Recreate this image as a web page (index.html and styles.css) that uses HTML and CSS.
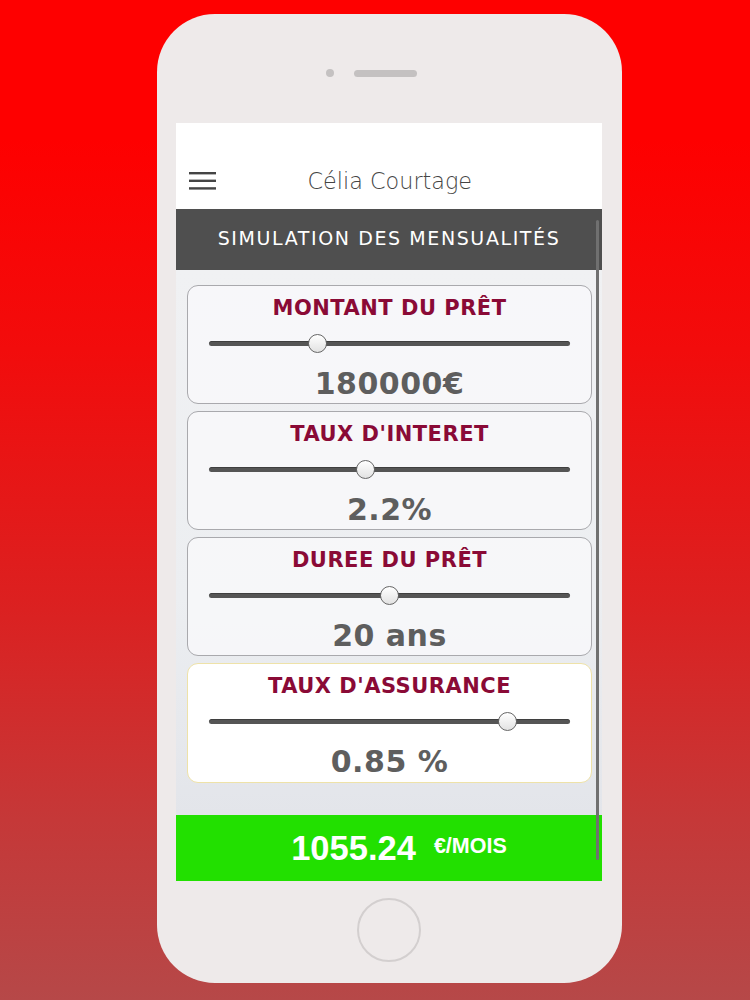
FILE: index.html
```html
<!DOCTYPE html>
<html lang="fr">
<head>
<meta charset="utf-8">
<title>Célia Courtage</title>
<link rel="stylesheet" href="styles.css">
</head>
<body>
<div class="phone">
  <div class="phone-top">
    <span class="camera"></span>
    <span class="speaker"></span>
  </div>
  <div class="screen">
    <header class="appbar">
      <svg class="burger" width="27" height="18" viewBox="0 0 27 18">
        <rect x="0" y="0" width="27" height="2.4" fill="#444"/>
        <rect x="0" y="7.6" width="27" height="2.4" fill="#444"/>
        <rect x="0" y="15.2" width="27" height="2.4" fill="#444"/>
      </svg>
      <div class="brand">Célia Courtage</div>
    </header>
    <div class="titlebar">SIMULATION DES MENSUALITÉS</div>
    <main class="content">
      <div class="scrollbar"></div>
      <section class="card">
        <h2 class="card-title">MONTANT DU PRÊT</h2>
        <div class="slider"><span class="thumb" style="left:30.1%"></span></div>
        <div class="value">180000€</div>
      </section>
      <section class="card">
        <h2 class="card-title">TAUX D'INTERET</h2>
        <div class="slider"><span class="thumb" style="left:43.4%"></span></div>
        <div class="value">2.2%</div>
      </section>
      <section class="card">
        <h2 class="card-title">DUREE DU PRÊT</h2>
        <div class="slider"><span class="thumb" style="left:50%"></span></div>
        <div class="value">20 ans</div>
      </section>
      <section class="card card-active">
        <h2 class="card-title">TAUX D'ASSURANCE</h2>
        <div class="slider"><span class="thumb" style="left:82.9%"></span></div>
        <div class="value">0.85 %</div>
      </section>
    </main>
    <footer class="result">
      <span class="amount">1055.24</span>
      <span class="unit">€/MOIS</span>
    </footer>
  </div>
  <div class="phone-bottom">
    <span class="home"></span>
  </div>
</div>
</body>
</html>
```
FILE: styles.css
```css
html, body {
  margin: 0;
  padding: 0;
}
body {
  width: 750px;
  height: 1000px;
  box-sizing: border-box;
  padding: 14px 0 0 157px;
  background: linear-gradient(to bottom, #fe0000 0%, #fe0000 14%, #f20c0c 35%, #dc2020 60%, #c53838 82%, #b64848 100%);
  font-family: "Liberation Sans", Arial, sans-serif;
  overflow: hidden;
}
.phone {
  width: 465px;
  height: 969px;
  background: #eeeaea;
  border-radius: 58px;
  box-sizing: border-box;
  padding: 0 20px 0 19px;
  display: flex;
  flex-direction: column;
}
.phone-top {
  height: 109px;
  display: flex;
  align-items: flex-start;
  justify-content: center;
  padding-top: 56px;
  box-sizing: border-box;
  gap: 20px;
  padding-right: 35px;
}
.camera {
  width: 8px;
  height: 8px;
  border-radius: 50%;
  background: #c4c1c1;
  margin-top: -1px;
}
.speaker {
  width: 63px;
  height: 7px;
  border-radius: 4px;
  background: #c4c1c1;
}
.screen {
  height: 758px;
  display: flex;
  flex-direction: column;
  background: #eef0f2;
}
.appbar {
  height: 86px;
  background: #ffffff;
  position: relative;
  display: flex;
  align-items: center;
  justify-content: center;
  padding-top: 29px;
  box-sizing: border-box;
}
.burger {
  position: absolute;
  left: 13px;
  top: 49px;
}
.brand {
  font-family: "DejaVu Sans", sans-serif;
  font-weight: 300;
  font-size: 23px;
  color: #444444;
  letter-spacing: 0;
  margin-left: 1px;
  transform: scaleX(0.97);
}
.titlebar {
  height: 61px;
  background: #4f4f4f;
  color: #ffffff;
  display: flex;
  align-items: center;
  justify-content: center;
  padding-bottom: 4px;
  box-sizing: border-box;
  font-family: "DejaVu Sans", sans-serif;
  font-size: 19px;
  letter-spacing: 1.6px;
}
.content {
  flex: 1;
  position: relative;
  padding: 15px 10px 0 11px;
  display: flex;
  flex-direction: column;
  gap: 7px;
  background: linear-gradient(180deg, #f0f1f3 0%, #eceef1 60%, #e3e5ea 100%);
}
.scrollbar {
  position: absolute;
  right: 3px;
  top: -50px;
  width: 3px;
  height: 640px;
  background: #707070;
  border-radius: 2px;
}
.card {
  height: 119px;
  box-sizing: border-box;
  border: 1.5px solid #a9a9ad;
  border-radius: 11px;
  background: rgba(248, 248, 250, 0.85);
  display: flex;
  flex-direction: column;
  align-items: center;
  padding: 10px 21px 0 21px;
}
.card-active {
  background: #ffffff;
  border-color: #eee2a8;
  height: 120px;
}
.card-title {
  margin: 0;
  font-family: "DejaVu Sans", sans-serif;
  font-weight: bold;
  font-size: 21px;
  color: #8a0a36;
  letter-spacing: 0.5px;
  line-height: 24px;
}
.slider {
  position: relative;
  align-self: stretch;
  height: 5px;
  margin-top: 21px;
  background: #555555;
  border-radius: 3px;
  border-top: 1px solid #3f3f3f;
  box-sizing: border-box;
}
.thumb {
  position: absolute;
  top: 50%;
  width: 19px;
  height: 19px;
  margin: -10px 0 0 -10px;
  border-radius: 50%;
  background: linear-gradient(#ffffff, #e2e2e2);
  border: 1.5px solid #666;
  box-sizing: border-box;
}
.value {
  margin-top: 20px;
  font-family: "DejaVu Sans", sans-serif;
  font-weight: bold;
  font-size: 30px;
  color: #5e5e5e;
  line-height: 36px;
  letter-spacing: 0.5px;
}
.result {
  height: 66px;
  background: #22e000;
  color: #ffffff;
  display: flex;
  align-items: center;
  justify-content: center;
  gap: 18px;
  padding-left: 20px;
  font-family: "Liberation Sans", Arial, sans-serif;
  font-weight: bold;
}
.amount {
  font-size: 34.5px;
}
.unit {
  font-size: 21.5px;
  margin-top: -3px;
}
.phone-bottom {
  flex: 1;
  display: flex;
  justify-content: center;
  padding-top: 17px;
  box-sizing: border-box;
}
.home {
  width: 64px;
  height: 64px;
  border-radius: 50%;
  border: 2px solid #d3cfcf;
  box-sizing: border-box;
}
```
